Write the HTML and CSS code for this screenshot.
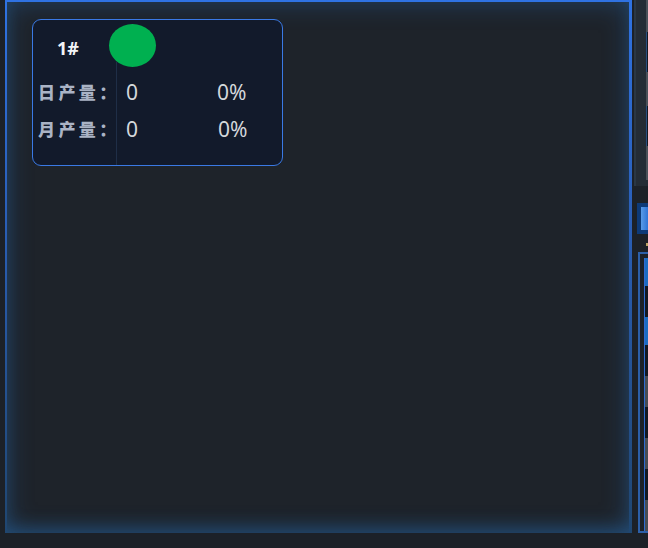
FILE: index.html
```html
<!DOCTYPE html>
<html lang="zh">
<head>
<meta charset="utf-8">
<link rel="stylesheet" href="styles.css">
</head>
<body>
<div class="app">
  <section class="main-panel">
    <div class="card">
      <div class="card-head">
        <span class="card-no">1#</span>
        <span class="status-dot"></span>
      </div>
      <div class="card-body">
        <div class="labels">
          <div class="label">日产量：</div>
          <div class="label">月产量：</div>
        </div>
        <div class="values">
          <div class="value-row"><span class="num">0</span><span class="pct">0%</span></div>
          <div class="value-row"><span class="num">0</span><span class="pct pct-2">0%</span></div>
        </div>
      </div>
    </div>
  </section>
  <aside class="side">
    <div class="side-top">
      <div class="rows">
        <div class="row gray short"></div>
        <div class="row dark"></div>
        <div class="row gray"></div>
        <div class="row dark"></div>
        <div class="row gray"></div>
      </div>
    </div>
    <div class="side-btn"><span class="side-btn-in"></span></div>
    <div class="side-dot"></div>
    <div class="side-bottom">
      <div class="rows2">
        <div class="row2 blue"></div>
        <div class="row2 dark"></div>
        <div class="row2 blue"></div>
        <div class="row2 dark"></div>
        <div class="row2 gray"></div>
        <div class="row2 dark"></div>
        <div class="row2 gray"></div>
        <div class="row2 dark"></div>
        <div class="row2 gray"></div>
      </div>
    </div>
  </aside>
</div>
</body>
</html>
```

FILE: styles.css
```css
html, body {
  margin: 0;
  padding: 0;
}
body {
  width: 648px;
  height: 548px;
  overflow: hidden;
  background: #1c2128;
  font-family: "Noto Sans CJK SC", "Noto Sans", sans-serif;
}
.app {
  display: flex;
  gap: 2px;
  padding-left: 5px;
  width: 648px;
  height: 548px;
  box-sizing: border-box;
  overflow: hidden;
}
.main-panel {
  box-sizing: border-box;
  width: 627px;
  height: 533px;
  flex: none;
  background: #1e232a;
  border-style: solid;
  border-width: 2px 3px 0 2px;
  border-image: linear-gradient(to bottom, #2f72e2 0%, #2a5fb8 40%, #1f4670 100%) 1;
  box-shadow: inset 0 0 26px rgba(40, 110, 180, 0.42), inset 0 -10px 18px -6px rgba(35, 95, 150, 0.45);
  padding: 17px 0 0 25px;
}
.card {
  box-sizing: border-box;
  width: 251px;
  height: 147px;
  background: #121a2b;
  border: 1px solid #3a79e4;
  border-radius: 9px;
  display: flex;
  flex-direction: column;
}
.card-head {
  height: 42px;
  display: flex;
  align-items: center;
  padding-left: 24px;
  position: relative;
}
.card-no {
  color: #f2f4f7;
  font-size: 18px;
  font-weight: 700;
  font-family: "Noto Sans", sans-serif;
  margin-top: 14px;
}
.status-dot {
  position: absolute;
  left: 76px;
  top: 4px;
  width: 47px;
  height: 43px;
  border-radius: 50%;
  background: #00b050;
  z-index: 1;
}
.card-body {
  flex: 1;
  display: flex;
}
.labels {
  width: 78px;
  padding-left: 5px;
  padding-top: 11px;
}
.label {
  height: 37px;
  line-height: 37px;
  color: #aab3c5;
  font-size: 17px;
  font-weight: 900;
  letter-spacing: 3.4px;
  white-space: nowrap;
}
.values {
  flex: 1;
  border-left: 1px solid #1f2e47;
  padding-left: 9px;
  padding-top: 11px;
}
.value-row {
  height: 37px;
  display: flex;
  align-items: center;
  color: #d4d7dc;
  font-size: 21px;
  font-family: "Noto Sans", sans-serif;
}
.num {
  width: 91px;
}
.pct-2 {
  margin-left: 1px;
}

/* right sliver */
.side {
  flex: 1;
  min-width: 0;
  display: flex;
  flex-direction: column;
}
.side-top {
  height: 186px;
  box-sizing: border-box;
  background: #242c35;
  border-left: 2px solid #2b3744;
  padding-left: 10px;
}
.rows {
  display: flex;
  flex-direction: column;
}
.row {
  height: 34px;
}
.row.short {
  height: 32px;
}
.row.gray {
  background: #4a5058;
}
.row.dark {
  background: #151a21;
  border-left: 1px solid #2a4f80;
  height: 40px;
}
.side-btn {
  margin-top: 17px;
  margin-left: 3px;
  height: 31px;
  background: #0d3a78;
  padding: 4px 0 4px 4px;
  box-sizing: border-box;
}
.side-btn-in {
  display: block;
  height: 100%;
  background: linear-gradient(to right, #5a9be8, #2f74d6);
}
.side-dot {
  margin: 9px 0 0 12px;
  width: 3px;
  height: 3px;
  background: #b9a263;
}
.side-bottom {
  margin-top: 6px;
  margin-left: 4px;
  height: 281px;
  box-sizing: border-box;
  border: 2px solid #2c5fa8;
  border-right: 0;
  padding: 4px 0 0 4px;
  overflow: hidden;
}
.rows2 {
  border-left: 1px solid #2f6bd2;
  display: flex;
  flex-direction: column;
}
.row2 {
  height: 31px;
}
.row2.blue {
  background: #1b6cc2;
  height: 28px;
}
.row2.dark {
  background: #131821;
}
.row2.gray {
  background: #474c54;
}
```
